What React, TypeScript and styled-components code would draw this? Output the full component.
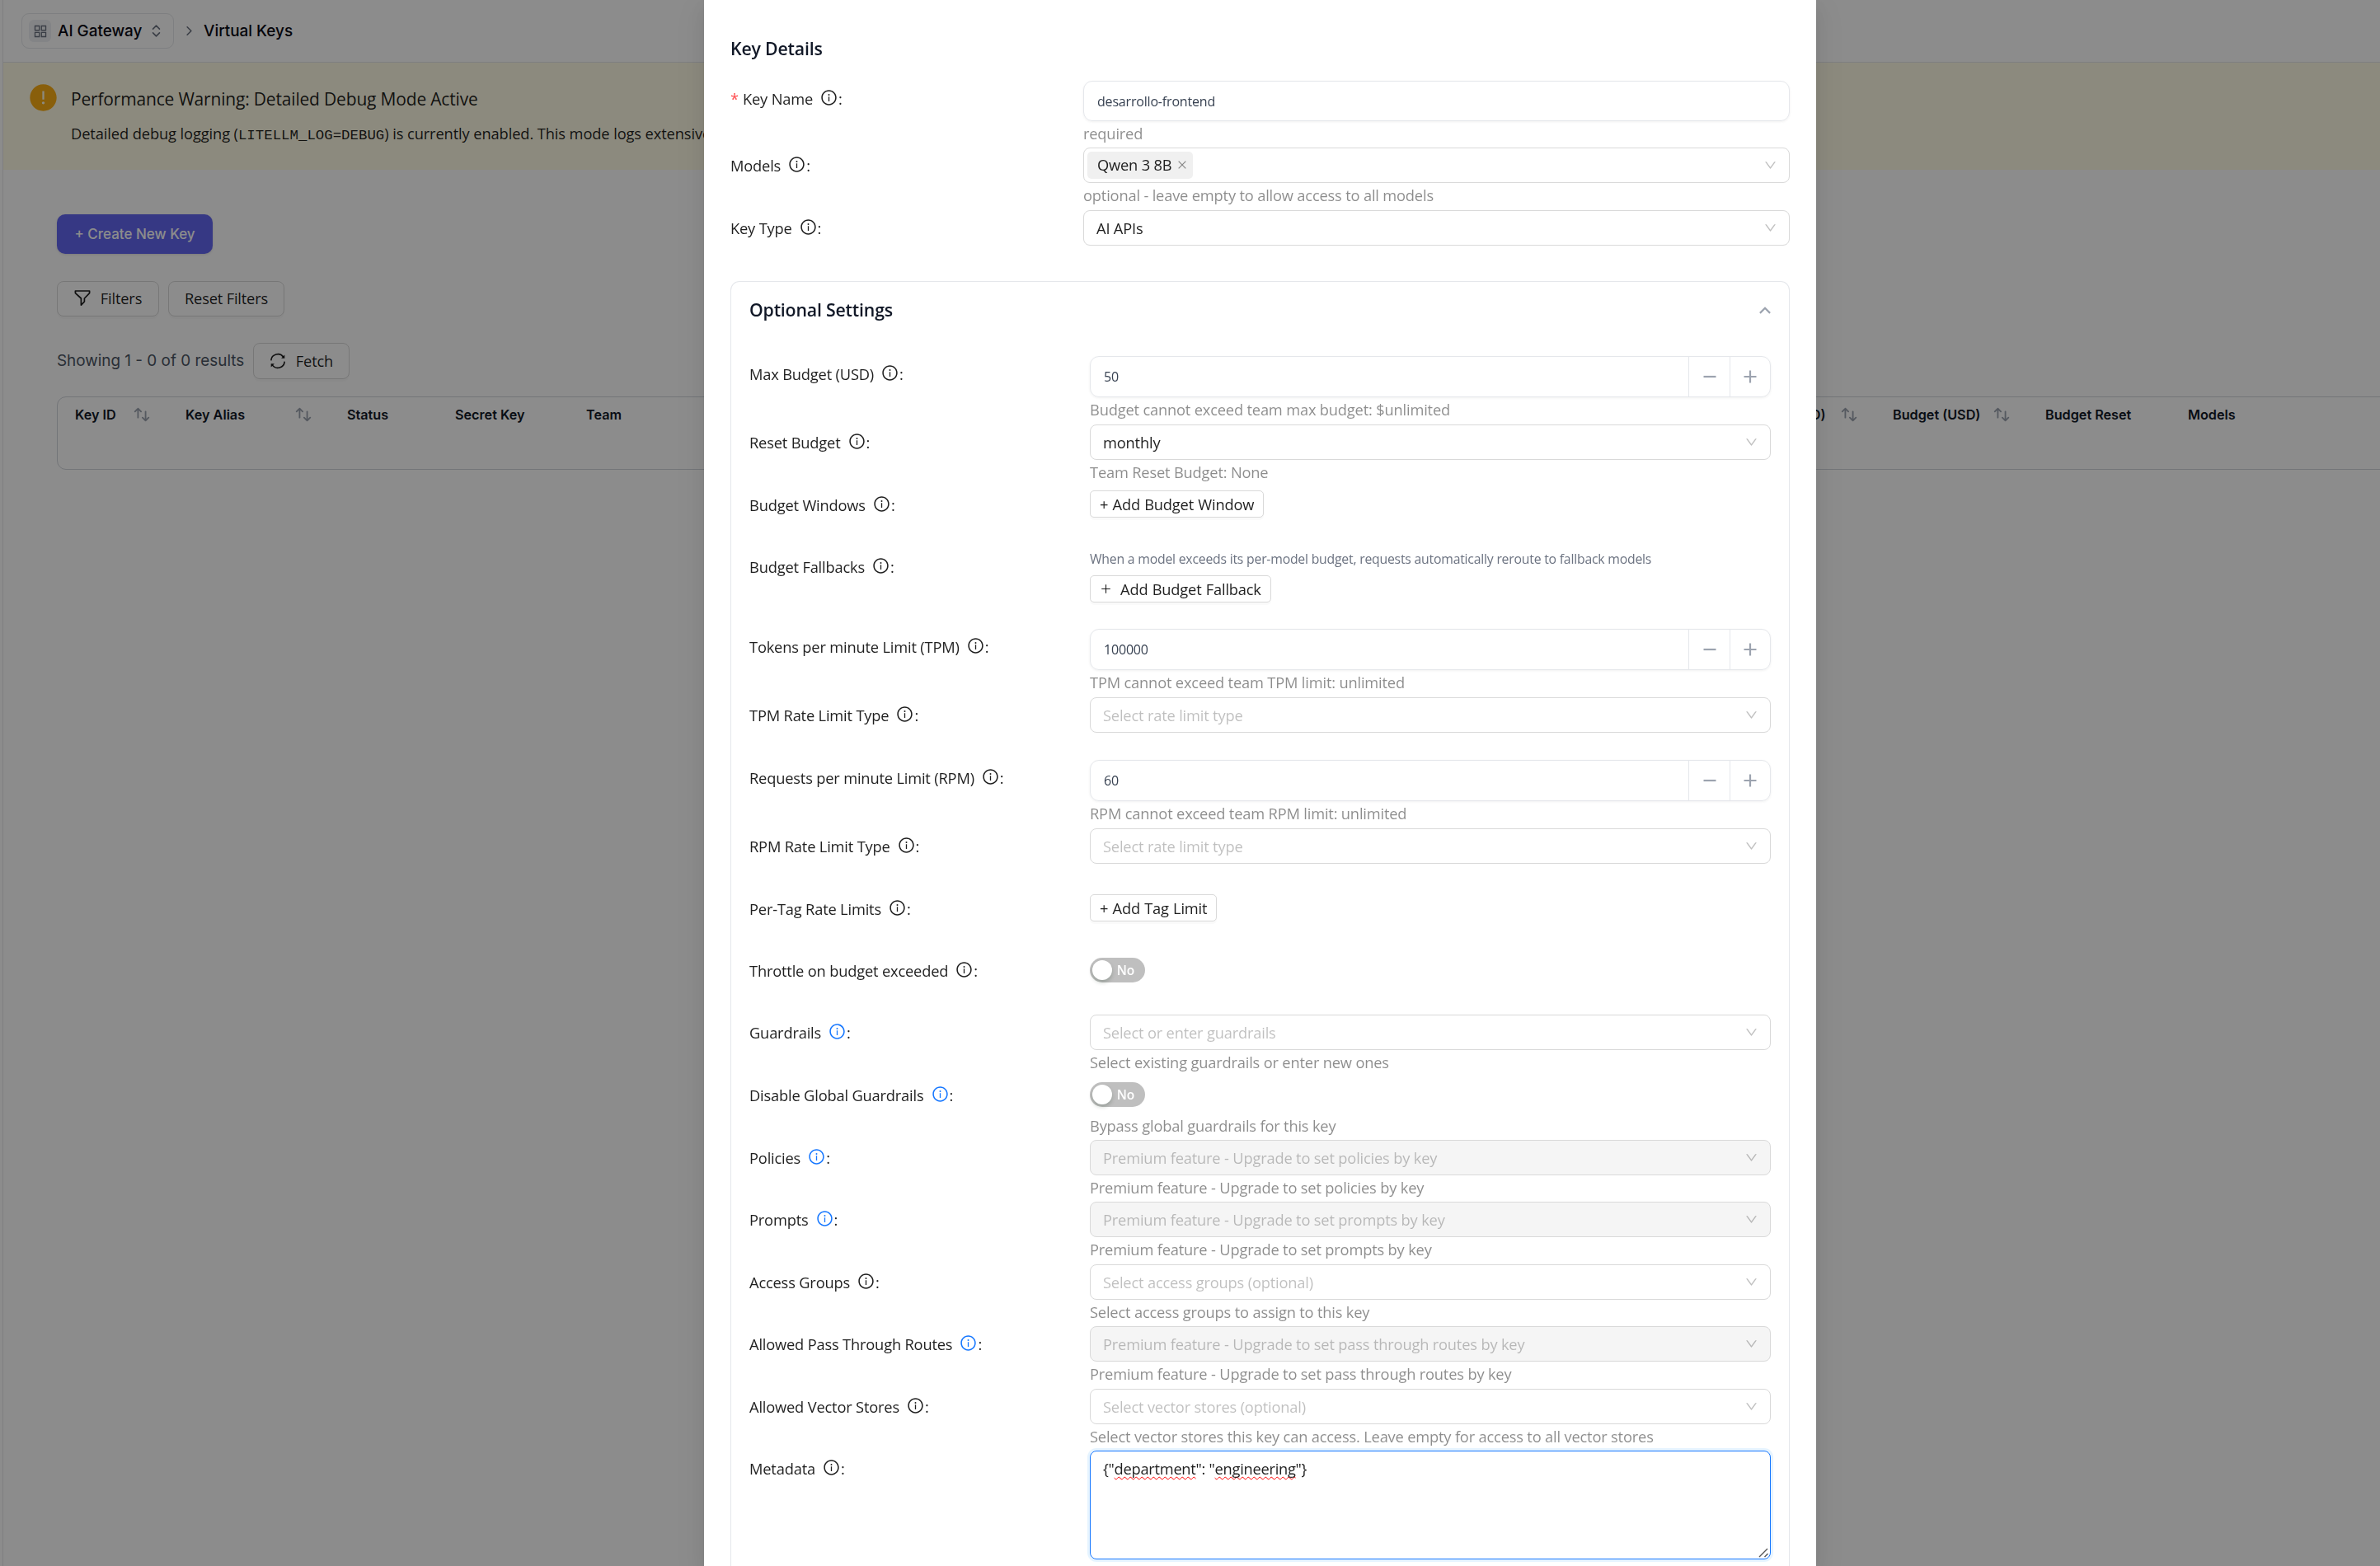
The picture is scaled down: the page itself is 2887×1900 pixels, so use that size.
import React from "react";
import styled, { createGlobalStyle, css } from "styled-components";
import {
  AiOutlineInfoCircle,
  AiOutlineDown,
  AiOutlineClose,
  AiOutlinePlus,
  AiFillExclamationCircle,
  AiOutlineAppstore,
} from "react-icons/ai";
import { ChevronsUpDown, ChevronRight } from "lucide-react";

const ui = `"Open Sans", "Noto Sans", sans-serif`;
const inter = `Inter, "Liberation Sans", sans-serif`;

const GlobalStyle = createGlobalStyle`
  html, body { margin: 0; padding: 0; background: #fff; }
  body { overflow: hidden; }
  *, *::before, *::after { box-sizing: border-box; }
  svg { display: block; flex: none; }
`;

const Viewport = styled.div`
  height: 1900px;
  overflow: hidden;
  display: flex;
  font: 400 18.3px/30px ${ui};
  letter-spacing: -0.01em;
  color: rgba(0, 0, 0, 0.88);
`;

const SidebarEdge = styled.div`
  flex: none;
  width: 4px;
  border-right: 1px solid #e5e7eb;
`;

const Page = styled.div`
  flex: 1;
  min-width: 0;
`;

const TopBar = styled.header`
  height: 76px;
  padding-left: 22px;
  display: flex;
  align-items: center;
  border-bottom: 1px solid #e5e7eb;
  font: 500 18.9px/28px ${inter};
  letter-spacing: 0;
  color: #0a0a14;
`;

const ProductPicker = styled.div`
  width: 185px;
  height: 43px;
  padding-left: 8px;
  display: flex;
  align-items: center;
  border: 1px solid #e5e7eb;
  border-radius: 9px;
  svg.updown { margin-left: 8px; color: #6b7280; }
`;

const ProductIcon = styled.span`
  width: 27px;
  height: 27px;
  margin-right: 8px;
  display: grid;
  place-items: center;
  border-radius: 6px;
  background: #eef1f5;
  color: #6b7280;
`;

const Separator = styled.span`
  width: 36px;
  display: grid;
  place-items: center;
  color: #6b7280;
`;

const Banner = styled.section`
  height: 130px;
  padding: 24px 30px;
  display: flex;
  gap: 15px;
  background: #fffbe6;
  > svg { color: #faad14; }
`;

const BannerTitle = styled.div`
  margin-top: 3px;
  font-size: 21px;
  line-height: 34px;
`;

const BannerText = styled.div`
  margin-top: 10px;
  letter-spacing: -0.006em;
  white-space: nowrap;
`;

const Code = styled.code`
  font: 400 17.4px/28px "Liberation Mono", monospace;
  letter-spacing: 0;
`;

const Content = styled.main`
  padding: 54px 0 0 65px;
`;

const Toolbar = styled.div<{ $top: number }>`
  margin-top: ${(p) => p.$top}px;
  display: flex;
  align-items: center;
  gap: 11px;
`;

const PrimaryButton = styled.button`
  width: 189px;
  height: 48px;
  padding: 0;
  border: 0;
  border-radius: 10px;
  background: #6366f1;
  color: #fff;
  font: 500 17px/28px ${inter};
  letter-spacing: 0;
  box-shadow: 0 1px 3px rgba(0, 0, 0, 0.12);
`;

const buttonBase = css`
  display: inline-flex;
  align-items: center;
  border: 1px solid #d9d9d9;
  background: #fff;
  color: rgba(0, 0, 0, 0.88);
  font: inherit;
  letter-spacing: inherit;
  white-space: nowrap;
  box-shadow: 0 3px 0 rgba(0, 0, 0, 0.02);
`;

const DefaultButton = styled.button<{ $w: number; $h: number }>`
  ${buttonBase}
  width: ${(p) => p.$w}px;
  height: ${(p) => p.$h}px;
  padding: 0 0 1px;
  justify-content: center;
  gap: 12px;
  border-radius: 8px;
`;

const ResultCount = styled.span`
  width: 227px;
  font: 400 18.9px/28px ${inter};
  letter-spacing: 0;
  white-space: nowrap;
  color: #4b5563;
`;

const Table = styled.div`
  margin-top: 21px;
  width: 2900px;
  height: 89px;
  display: grid;
  grid-template-columns: 134px 196px 131px 159px 1403px 182px 185px 173px 300px;
  align-items: start;
  border: 1px solid #d1d5db;
  border-radius: 11px;
`;

const HeadCell = styled.div`
  height: 42px;
  padding: 0 21px;
  display: flex;
  align-items: center;
  justify-content: space-between;
  font: 600 16.2px/24px ${inter};
  letter-spacing: 0;
  white-space: nowrap;
  color: #111827;
  svg { color: #9ca3af; }
`;

const Mask = styled.div`
  position: fixed;
  inset: 0;
  padding-left: 854px;
  display: flex;
  background: rgba(0, 0, 0, 0.45);
`;

const Modal = styled.div`
  width: 1349px;
  padding: 43px 32px 0;
  display: flex;
  flex-direction: column;
  background: #fff;
  box-shadow: 0 8px 22px rgba(0, 0, 0, 0.08), 0 4px 8px -5px rgba(0, 0, 0, 0.12),
    0 12px 38px 11px rgba(0, 0, 0, 0.05);
`;

const Heading = styled.h3`
  margin: 0;
  font: 600 21.3px/32px ${ui};
  letter-spacing: -0.009em;
  color: #111827;
`;

const Basics = styled.div`
  margin-top: 23px;
`;

const Row = styled.div<{ $h: number; $label?: number }>`
  height: ${(p) => p.$h}px;
  display: grid;
  grid-template-columns: ${(p) => p.$label ?? 413}px 1fr;
`;

const Label = styled.label`
  height: 43px;
  display: flex;
  align-items: center;
  white-space: nowrap;
`;

const Hint = styled.span<{ $blue?: boolean }>`
  margin: -2px 1px 0 9px;
  color: ${(p) => (p.$blue ? "#1677ff" : "rgba(0,0,0,0.88)")};
`;

const Star = styled.span`
  width: 15px;
  color: #ff4d4f;
`;

const Help = styled.div`
  line-height: 29px;
  white-space: nowrap;
  color: rgba(0, 0, 0, 0.45);
`;

const TextField = styled.div`
  height: 49px;
  padding-left: 16px;
  display: flex;
  align-items: center;
  border: 1px solid #e5e7eb;
  border-radius: 11px;
  font-size: 16px;
  color: #374151;
  box-shadow: 0 1px 3px rgba(0, 0, 0, 0.06);
`;

const NumberField = styled(TextField)`
  height: 50px;
`;

const Step = styled.span`
  width: 50px;
  height: 48px;
  display: grid;
  place-items: center;
  border-left: 1px solid #e5e7eb;
  color: #9ca3af;
  &:last-child { width: 49px; }
`;

const Value = styled.span`
  flex: 1;
`;

const SelectBox = styled.div<{ $disabled?: boolean; $placeholder?: boolean; $tags?: boolean }>`
  height: 43px;
  padding: 0 14px 0 ${(p) => (p.$tags ? 4 : 15)}px;
  display: flex;
  align-items: center;
  justify-content: space-between;
  border: 1px solid #d9d9d9;
  border-radius: 8px;
  background: ${(p) => (p.$disabled ? "#f5f5f5" : "#fff")};
  color: ${(p) => (p.$placeholder ? "rgba(0,0,0,0.25)" : "rgba(0,0,0,0.88)")};
  > svg { color: rgba(0, 0, 0, 0.25); }
`;

const Tag = styled.span`
  height: 33px;
  padding: 0 6px 1px 12px;
  display: inline-flex;
  align-items: center;
  gap: 6px;
  border-radius: 5px;
  background: #f0f0f0;
  svg { color: rgba(0, 0, 0, 0.45); }
`;

const SmallButton = styled.button<{ $gap?: number }>`
  ${buttonBase}
  height: 33px;
  padding: 0 11px 0 11px;
  gap: ${(p) => p.$gap ?? 0}px;
  border-radius: 5px;
  word-spacing: 0.7px;
`;

const ButtonSlot = styled.div`
  padding-top: 4px;
`;

const Note = styled.div`
  margin-bottom: 8px;
  font-size: 15.8px;
  line-height: 24px;
  letter-spacing: -0.014em;
  color: #6b7280;
`;

const SwitchSlot = styled.div`
  height: 44px;
  padding-top: 6px;
`;

const Switch = styled.span`
  width: 67px;
  height: 30px;
  padding: 0 13px 0 3px;
  display: flex;
  align-items: center;
  justify-content: space-between;
  border-radius: 15px;
  background: #bfbfbf;
  color: #fff;
  font-size: 15.5px;
  font-weight: 600;
  &::before {
    content: "";
    width: 24px;
    height: 24px;
    border-radius: 50%;
    background: #fff;
    box-shadow: 0 3px 5px rgba(0, 35, 11, 0.2);
  }
`;

const Panel = styled.section`
  margin-top: 10px;
  flex: 1;
  padding: 0 22px;
  border: 1px solid #e5e7eb;
  border-bottom: 0;
  border-radius: 11px 11px 0 0;
`;

const PanelHead = styled.div`
  height: 90px;
  padding-bottom: 22px;
  display: flex;
  align-items: center;
  justify-content: space-between;
`;

const Editor = styled.div`
  height: 132px;
  padding: 6px 0 0 15px;
  display: flex;
  justify-content: space-between;
  border: 1px solid #1677ff;
  border-radius: 8px;
  box-shadow: 0 0 0 3px rgba(5, 145, 255, 0.1);
  letter-spacing: -0.015em;
  svg { align-self: flex-end; }
`;

const Misspelt = styled.span`
  text-decoration: underline wavy #f00 1.3px;
  text-decoration-skip-ink: none;
  text-underline-offset: 2px;
`;

const SortIcon = () => (
  <svg width="22" height="22" viewBox="0 0 24 24" fill="none" stroke="currentColor" strokeWidth="2" strokeLinecap="round" strokeLinejoin="round">
    <path d="M7 16V4m0 0L3 8m4-4l4 4m6 0v12m0 0l4-4m-4 4l-4-4" />
  </svg>
);

const FunnelIcon = () => (
  <svg width="20" height="20" viewBox="0 0 20 20" fill="none" stroke="currentColor" strokeWidth="1.7" strokeLinejoin="round">
    <path d="M1.4 1h17.2v2.6l-6.2 6.4v4l-4 4.2v-8.2l-7-6.4z" />
  </svg>
);

const SyncIcon = () => (
  <svg width="20" height="20" viewBox="0 0 20 20" fill="none" stroke="currentColor" strokeWidth="1.6">
    <path d="M1.8 9.4a8.2 8.2 0 0 1 15-4" />
    <path d="M18.2 10.6a8.2 8.2 0 0 1-15 4" />
    <path d="M18.3 2.6v4.2h-4.2z" fill="currentColor" stroke="none" />
    <path d="M1.7 17.4v-4.2h4.2z" fill="currentColor" stroke="none" />
  </svg>
);

const CollapseIcon = () => (
  <svg width="14" height="9" viewBox="0 0 14 9" fill="none" stroke="#9ca3af" strokeWidth="2.2">
    <path d="M0.9 7.9L7 1.8l6.1 6.1" />
  </svg>
);

const StepIcon = ({ plus }: { plus?: boolean }) => (
  <svg width="16" height="16" viewBox="0 0 16 16" stroke="currentColor" strokeWidth="2.2">
    <path d={plus ? "M0.5 8h15M8 0.5v15" : "M0.5 8h15"} />
  </svg>
);

const ResizeGrip = () => (
  <svg width="14" height="14" viewBox="0 0 14 14" stroke="#555" strokeWidth="1.4">
    <path d="M1 12L11 2M7.5 12L11.5 8" />
  </svg>
);

type FieldLabelProps = { text: string; blue?: boolean; required?: boolean };
const FieldLabel = ({ text, blue, required }: FieldLabelProps) => (
  <Label>
    {required && <Star>*</Star>}
    {text}
    <Hint $blue={blue}>
      <AiOutlineInfoCircle size={21} />
    </Hint>
    :
  </Label>
);

type SelectProps = { value?: string; placeholder?: string; disabled?: boolean };
const Select = ({ value, placeholder, disabled }: SelectProps) => (
  <SelectBox $disabled={disabled} $placeholder={!value}>
    {value ?? placeholder}
    <AiOutlineDown size={17} />
  </SelectBox>
);

const Stepper = ({ value }: { value: string }) => (
  <NumberField>
    <Value>{value}</Value>
    <Step><StepIcon /></Step>
    <Step><StepIcon plus /></Step>
  </NumberField>
);

const Toggle = () => (
  <SwitchSlot>
    <Switch>No</Switch>
  </SwitchSlot>
);

type Field = {
  label: string;
  h: number;
  blue?: boolean;
  help?: string;
  control: React.ReactNode;
};

const fields: Field[] = [
  { label: "Max Budget (USD)", h: 83, control: <Stepper value="50" />, help: "Budget cannot exceed team max budget: $unlimited" },
  { label: "Reset Budget", h: 76, control: <Select value="monthly" />, help: "Team Reset Budget: None" },
  { label: "Budget Windows", h: 75, control: <ButtonSlot><SmallButton>+ Add Budget Window</SmallButton></ButtonSlot> },
  {
    label: "Budget Fallbacks",
    h: 97,
    control: (
      <div>
        <Note>When a model exceeds its per-model budget, requests automatically reroute to fallback models</Note>
        <SmallButton $gap={10}><AiOutlinePlus size={15} />Add Budget Fallback</SmallButton>
      </div>
    ),
  },
  { label: "Tokens per minute Limit (TPM)", h: 83, control: <Stepper value="100000" />, help: "TPM cannot exceed team TPM limit: unlimited" },
  { label: "TPM Rate Limit Type", h: 76, control: <Select placeholder="Select rate limit type" /> },
  { label: "Requests per minute Limit (RPM)", h: 83, control: <Stepper value="60" />, help: "RPM cannot exceed team RPM limit: unlimited" },
  { label: "RPM Rate Limit Type", h: 76, control: <Select placeholder="Select rate limit type" /> },
  { label: "Per-Tag Rate Limits", h: 75, control: <ButtonSlot><SmallButton>+ Add Tag Limit</SmallButton></ButtonSlot> },
  { label: "Throttle on budget exceeded", h: 75, control: <Toggle /> },
  { label: "Guardrails", h: 76, blue: true, control: <Select placeholder="Select or enter guardrails" />, help: "Select existing guardrails or enter new ones" },
  { label: "Disable Global Guardrails", h: 76, blue: true, control: <Toggle />, help: "Bypass global guardrails for this key" },
  { label: "Policies", h: 75, blue: true, control: <Select disabled placeholder="Premium feature - Upgrade to set policies by key" />, help: "Premium feature - Upgrade to set policies by key" },
  { label: "Prompts", h: 76, blue: true, control: <Select disabled placeholder="Premium feature - Upgrade to set prompts by key" />, help: "Premium feature - Upgrade to set prompts by key" },
  { label: "Access Groups", h: 75, control: <Select placeholder="Select access groups (optional)" />, help: "Select access groups to assign to this key" },
  { label: "Allowed Pass Through Routes", h: 76, blue: true, control: <Select disabled placeholder="Premium feature - Upgrade to set pass through routes by key" />, help: "Premium feature - Upgrade to set pass through routes by key" },
  { label: "Allowed Vector Stores", h: 75, control: <Select placeholder="Select vector stores (optional)" />, help: "Select vector stores this key can access. Leave empty for access to all vector stores" },
  {
    label: "Metadata",
    h: 132,
    control: (
      <Editor>
        <span>{'{"'}<Misspelt>department</Misspelt>{'": "'}<Misspelt>engineering</Misspelt>{'"}'}</span>
        <ResizeGrip />
      </Editor>
    ),
  },
];

const columns: { title: string; sortable?: boolean }[] = [
  { title: "Key ID", sortable: true },
  { title: "Key Alias", sortable: true },
  { title: "Status" },
  { title: "Secret Key" },
  { title: "Team" },
  { title: "Spend (USD)", sortable: true },
  { title: "Budget (USD)", sortable: true },
  { title: "Budget Reset" },
  { title: "Models" },
];

export default function App() {
  return (
    <Viewport>
      <GlobalStyle />
      <SidebarEdge />
      <Page>
        <TopBar>
          <ProductPicker>
            <ProductIcon><AiOutlineAppstore size={20} /></ProductIcon>
            AI Gateway
            <ChevronsUpDown className="updown" size={19} strokeWidth={2} />
          </ProductPicker>
          <Separator><ChevronRight size={19} strokeWidth={2} /></Separator>
          Virtual Keys
        </TopBar>
        <Banner>
          <AiFillExclamationCircle size={37} />
          <div>
            <BannerTitle>Performance Warning: Detailed Debug Mode Active</BannerTitle>
            <BannerText>
              Detailed debug logging (<Code>LITELLM_LOG=DEBUG</Code>) is currently enabled. This mode logs extensive
            </BannerText>
          </div>
        </Banner>
        <Content>
          <PrimaryButton>+ Create New Key</PrimaryButton>
          <Toolbar $top={33}>
            <DefaultButton $w={124} $h={43}><FunnelIcon />Filters</DefaultButton>
            <DefaultButton $w={141} $h={43}>Reset Filters</DefaultButton>
          </Toolbar>
          <Toolbar $top={32}>
            <ResultCount>Showing 1 - 0 of 0 results</ResultCount>
            <DefaultButton $w={117} $h={44}><SyncIcon />Fetch</DefaultButton>
          </Toolbar>
          <Table>
            {columns.map((c) => (
              <HeadCell key={c.title}>
                {c.title}
                {c.sortable && <SortIcon />}
              </HeadCell>
            ))}
          </Table>
        </Content>
      </Page>
      <Mask>
        <Modal>
          <Heading>Key Details</Heading>
          <Basics>
            <Row $h={81} $label={428}>
              <FieldLabel text="Key Name" required />
              <div>
                <TextField>desarrollo-frontend</TextField>
                <Help>required</Help>
              </div>
            </Row>
            <Row $h={76} $label={428}>
              <FieldLabel text="Models" />
              <div>
                <SelectBox $tags>
                  <Tag>Qwen 3 8B<AiOutlineClose size={14} /></Tag>
                  <AiOutlineDown size={17} />
                </SelectBox>
                <Help>optional - leave empty to allow access to all models</Help>
              </div>
            </Row>
            <Row $h={76} $label={428}>
              <FieldLabel text="Key Type" />
              <div><Select value="AI APIs" /></div>
            </Row>
          </Basics>
          <Panel>
            <PanelHead>
              <Heading>Optional Settings</Heading>
              <CollapseIcon />
            </PanelHead>
            {fields.map((f) => (
              <Row key={f.label} $h={f.h}>
                <FieldLabel text={f.label} blue={f.blue} />
                <div>
                  {f.control}
                  {f.help && <Help>{f.help}</Help>}
                </div>
              </Row>
            ))}
          </Panel>
        </Modal>
      </Mask>
    </Viewport>
  );
}
